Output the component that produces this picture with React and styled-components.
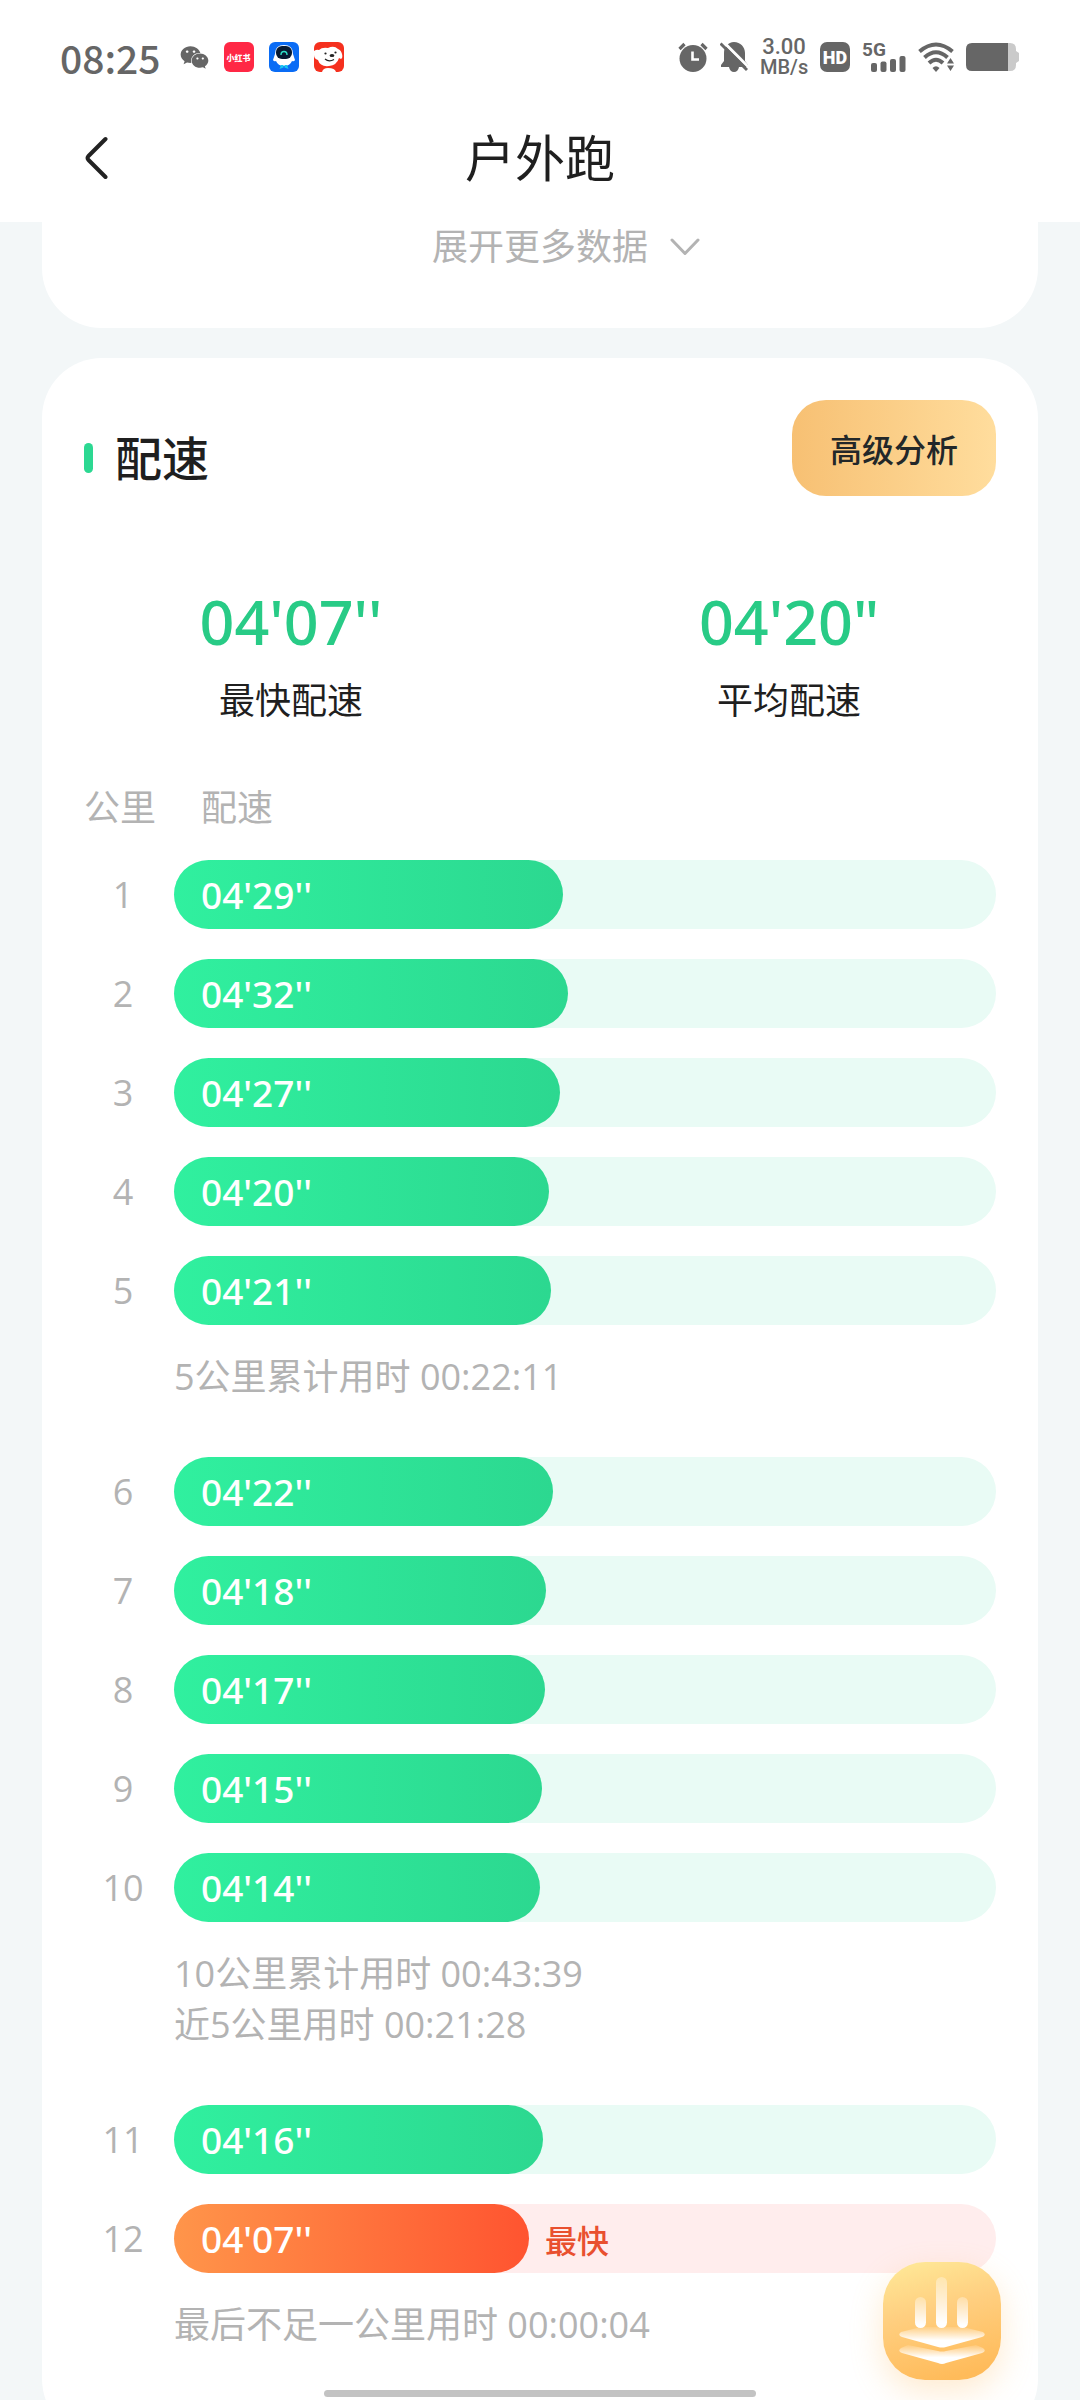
import styled, { createGlobalStyle } from "styled-components";
import { FaWeixin } from "react-icons/fa";

const GlobalStyle = createGlobalStyle`
  * {
    box-sizing: border-box;
  }

  body {
    margin: 0;
    background: #f3f7f8;
    color: #1f1f1f;
    font-family: "Open Sans", "Noto Sans CJK SC", sans-serif;
  }

  button {
    border: none;
    padding: 0;
    background: none;
    color: inherit;
    font-family: inherit;
    cursor: pointer;
  }
`;

const Screen = styled.div`
  height: 100vh;
  display: flex;
  flex-direction: column;
  overflow: hidden;
`;

// status bar

const StatusBar = styled.div`
  flex: none;
  display: flex;
  align-items: center;
  justify-content: space-between;
  height: 94px;
  padding: 20px 61px 0 60px;
  background: white;
  color: #666;
`;

const StatusGroup = styled.div`
  display: flex;
  align-items: center;
  gap: ${(props) => props.$gap}px;
`;

const Clock = styled.span`
  margin-right: 4px;
  font-family: "Noto Sans CJK SC", sans-serif;
  font-size: 39px;
  font-weight: 500;
  line-height: 36px;
`;

const AppBadge = styled.span`
  display: flex;
  align-items: center;
  justify-content: center;
  width: 30px;
  height: 30px;
  border-radius: 6px;
  background: #ff2845;
  color: white;
  font-size: 8px;
  font-weight: 900;
  white-space: nowrap;
`;

const NetSpeed = styled.div`
  width: 48px;
  font-family: Roboto, sans-serif;
  font-size: 20px;
  font-weight: 500;
  line-height: 20px;
  text-align: center;
`;

const SpeedValue = styled.div`
  font-size: 22px;
`;

const HdBadge = styled.span`
  display: flex;
  align-items: center;
  justify-content: center;
  width: 30px;
  height: 30px;
  border-radius: 7px;
  background: #666;
  color: white;
  font-family: Roboto, sans-serif;
  font-size: 18px;
  font-weight: 900;
`;

// title bar

const TitleBar = styled.header`
  flex: none;
  display: grid;
  grid-template-columns: 1fr auto 1fr;
  align-items: center;
  height: 128px;
  padding: 0 84px;
  background: white;
`;

const BackButton = styled.button`
  display: flex;
  justify-self: start;
`;

const PageTitle = styled.h1`
  margin: 0;
  font-size: 50px;
  font-weight: 400;
  line-height: 64px;
`;

const Content = styled.main`
  flex: 1;
  min-height: 0;
  overflow: hidden;
  padding: 0 42px;
  display: flex;
  flex-direction: column;
  gap: 30px;
`;

const MoreCard = styled.section`
  flex: none;
  padding-bottom: 56px;
  background: white;
  border-radius: 0 0 60px 60px;
`;

const MoreButton = styled.button`
  display: grid;
  grid-template-columns: 1fr auto 1fr;
  align-items: center;
  column-gap: 22px;
  width: 100%;
  color: #b3b3b3;
  font-size: 36px;
  line-height: 50px;
`;

const MoreLabel = styled.span`
  grid-column: 2;
`;

const PaceCard = styled.section`
  flex: none;
  padding: 42px 42px 64px;
  background: white;
  border-radius: 60px;
`;

const CardHead = styled.div`
  display: flex;
  align-items: flex-end;
  justify-content: space-between;
`;

const CardTitle = styled.h2`
  display: flex;
  align-items: center;
  gap: 22px;
  margin: 0;
  font-size: 47px;
  font-weight: 500;
  line-height: 76px;

  &::before {
    content: "";
    width: 9px;
    height: 30px;
    border-radius: 5px;
    background: #2cd892;
  }
`;

const AnalysisButton = styled.button`
  height: 96px;
  padding: 0 38px;
  border-radius: 34px;
  background: linear-gradient(90deg, #f7c073, #ffdd9d);
  color: #222729;
  font-size: 32px;
  font-weight: 500;
`;

const Stats = styled.div`
  display: grid;
  grid-template-columns: 1fr 1fr;
  margin: 86px -42px 60px;
  text-align: center;
`;

const StatValue = styled.div`
  margin-bottom: 14px;
  color: #28cb86;
  font-family: "Noto Sans", sans-serif;
  font-size: 61px;
  font-weight: 500;
  line-height: 80px;
`;

const StatLabel = styled.div`
  font-size: 36px;
  line-height: 50px;
`;

// pace table

const PaceTable = styled.table`
  width: 100%;
  border-collapse: collapse;
  color: #b3b3b3;
`;

const HeadCell = styled.th`
  width: ${(props) => props.$width || "auto"};
  padding: 0 0 0 ${(props) => props.$indent || 0}px;
  font-size: 36px;
  font-weight: 400;
  line-height: 44px;
  text-align: left;
`;

const KmCell = styled.td`
  padding: 30px 12px 0 0;
  font-size: 36px;
  line-height: 69px;
  text-align: center;
`;

const BarCell = styled.td`
  padding: 30px 0 0;
`;

const NoteCell = styled.td`
  padding: 26px 0 25px;
  font-size: 36px;
  line-height: 51px;
`;

const Track = styled.div`
  display: flex;
  align-items: center;
  gap: 16px;
  height: 69px;
  border-radius: 35px;
  background: ${(props) => (props.$fastest ? "#ffeded" : "#e9fbf5")};
`;

const Fill = styled.div`
  height: 69px;
  padding-left: 27px;
  border-radius: 35px;
  background: ${(props) =>
    props.$fastest
      ? "linear-gradient(90deg, #ff954a, #ff5430)"
      : "linear-gradient(90deg, #30f09f, #2cd890)"};
  color: white;
  font-family: "Noto Sans", sans-serif;
  font-size: 37px;
  font-weight: 500;
  line-height: 69px;
`;

const FastestTag = styled.span`
  color: #e9502f;
  font-size: 32px;
  font-weight: 500;
`;

const FloatingButton = styled.button`
  position: fixed;
  right: 79px;
  bottom: 20px;
  width: 118px;
  height: 118px;
  border-radius: 42px;
  background: linear-gradient(165deg, #ffe998 2%, #ffcf80 40%, #ffbb5a 90%);
  box-shadow: 0 12px 32px rgba(255, 190, 100, 0.3);
`;

const HomeIndicator = styled.div`
  position: fixed;
  bottom: 3px;
  left: 30%;
  right: 30%;
  height: 7px;
  border-radius: 4px;
  background: #c3c3c3;
`;

const AssistantIcon = () => (
  <svg width="30" height="30" viewBox="0 0 30 30">
    <rect width="30" height="30" rx="6" fill="#0a6cf5" />
    <path d="M6 12 Q6 3 15 3 Q24 3 24 12 L26 18 Q25 20 23 19 Q21 24 15 24 Q9 24 7 19 Q5 20 4 18Z" fill="#fff" />
    <rect x="7" y="4" width="16" height="13" rx="6" fill="#071a33" />
    <path d="M12 13 Q12 9.5 15 9.5 Q18 9.5 18 13" fill="none" stroke="#2fe0c8" strokeWidth="1.4" />
    <path d="M12 23h2.500v2.500l-4 1.500zM18 23h-2.500v2.500l4 1.500z" fill="#19c8f0" />
  </svg>
);

const DogIcon = () => (
  <svg width="30" height="30" viewBox="0 0 30 30">
    <rect width="30" height="30" rx="6" fill="#f5301e" />
    <path d="M0 9 Q3 7 5 8 Q8 5 14 6 Q20 3 24 7 Q27 8 28 12 Q29 16 27 17 L25 16 Q23 23 15 24 Q6 25 4 18 Q0 17 0 13Z" fill="#fff" />
    <path d="M8 30 Q9 26 14 26 Q21 26 22 30Z" fill="#fff" />
    <ellipse cx="18" cy="13.500" rx="2.400" ry="1.600" fill="#222" />
    <circle cx="11.500" cy="11.500" r="1.100" fill="#222" />
    <circle cx="21.500" cy="10.500" r="1.100" fill="#222" />
    <path d="M11 17 Q15 20.500 20 17.500" fill="none" stroke="#222" strokeWidth="1.200" />
  </svg>
);

const AlarmIcon = () => (
  <svg width="30" height="30" viewBox="0 0 30 30" fill="none">
    <circle cx="15" cy="16.500" r="13.500" fill="#666" />
    <path d="M1.500 7 L6.500 2 M28.500 7 L23.500 2" stroke="#666" strokeWidth="3.200" />
    <path d="M14.500 9.500 V17.500 H21" stroke="#fff" strokeWidth="2.600" />
  </svg>
);

const MutedBellIcon = () => (
  <svg width="28" height="30" viewBox="0 0 28 30">
    <path d="M14 0 C20.500 0 25 5 25 11 V19 L28 23 V25 H1 V23 L4 19 V11 C4 5 8 0 14 0Z" fill="#666" />
    <path d="M9 25 H19 Q18 30 14 30 Q10 30 9 25Z" fill="#666" />
    <path d="M3 -0.500 L30 26.500" stroke="#fff" strokeWidth="3" />
    <path d="M0.500 1.500 L27 28" stroke="#666" strokeWidth="3" />
  </svg>
);

const SignalIcon = () => (
  <svg width="44" height="46" viewBox="0 -8 44 46" fill="#666">
    <text x="0" y="14" fontFamily="Roboto, sans-serif" fontSize="19" fontWeight="700">
      5G
    </text>
    <rect x="9" y="21" width="6" height="9" rx="2" />
    <rect x="18.500" y="19.500" width="6" height="10.500" rx="2" />
    <rect x="28" y="17" width="6" height="13" rx="2" />
    <rect x="37.500" y="14" width="6" height="16" rx="2" />
  </svg>
);

const WifiIcon = () => (
  <svg width="36" height="30" viewBox="0 0 36 30" fill="none" stroke="#666" strokeWidth="4">
    <path d="M1.500 9.500 Q18 -4.500 34.500 9.500" />
    <path d="M6.500 15.500 Q18 5 29.500 15.500" />
    <path d="M11 21 Q18 14.500 25 21" />
    <path d="M14.500 26 Q18 22.500 21.500 26 L18 30Z" fill="#666" stroke="none" />
    <path d="M29 21.500 L32.500 16 L36 21.500Z M29 23.500 L32.500 29 L36 23.500Z" fill="#666" stroke="none" />
  </svg>
);

const BatteryIcon = () => (
  <svg width="53" height="28" viewBox="0 0 53 28">
    <path d="M42 0 H44 Q50 0 50 6 V8 L53 10 V18 L50 20 V22 Q50 28 44 28 H42Z" fill="#cacaca" />
    <path d="M6 0 H42 V28 H6 Q0 28 0 22 V6 Q0 0 6 0Z" fill="#666" />
  </svg>
);

const BackIcon = () => (
  <svg width="24" height="44" viewBox="0 0 24 44" fill="none">
    <path d="M21.500 3 L4.500 20 Q2.500 22 4.500 24 L21.500 41" stroke="#222" strokeWidth="4" strokeLinecap="round" />
  </svg>
);

const DownIcon = () => (
  <svg width="30" height="18" viewBox="0 0 30 18" fill="none">
    <path d="M2 2 L15 15.500 L28 2" stroke="#b3b3b3" strokeWidth="3" strokeLinecap="round" strokeLinejoin="round" />
  </svg>
);

const LayersIcon = () => (
  <svg width="118" height="118" viewBox="0 0 118 118">
    <defs>
      <linearGradient id="bar" x1="0" y1="0" x2="0" y2="1">
        <stop offset="0" stopColor="#fff" stopOpacity="0.3" />
        <stop offset="0.900" stopColor="#fff" />
      </linearGradient>
      <linearGradient id="layer" x1="0" y1="0" x2="0" y2="1">
        <stop offset="0" stopColor="#fff" stopOpacity="0.1" />
        <stop offset="0.650" stopColor="#fff" />
      </linearGradient>
    </defs>
    <path d="M18 70 Q14 73 19 75 L55 85 Q59 86 63 85 L99 75 Q104 73 100 70 L80 65 H38Z" fill="url(#layer)" />
    <path d="M25 83 L18 86 Q14 89 19 91 L55 101 Q59 103 63 101 L99 91 Q104 89 100 86 L93 83 L63 89 Q59 90 55 89Z" fill="url(#layer)" />
    <rect x="32" y="35" width="11" height="31" rx="5.500" fill="url(#bar)" />
    <rect x="53" y="15" width="11" height="51" rx="5.500" fill="url(#bar)" />
    <rect x="74" y="35" width="11" height="31" rx="5.500" fill="url(#bar)" />
  </svg>
);

const splits = [
  { km: 1, pace: "04'29''", seconds: 269 },
  { km: 2, pace: "04'32''", seconds: 272 },
  { km: 3, pace: "04'27''", seconds: 267 },
  { km: 4, pace: "04'20''", seconds: 260 },
  { km: 5, pace: "04'21''", seconds: 261 },
  { notes: ["5公里累计用时 00:22:11"] },
  { km: 6, pace: "04'22''", seconds: 262 },
  { km: 7, pace: "04'18''", seconds: 258 },
  { km: 8, pace: "04'17''", seconds: 257 },
  { km: 9, pace: "04'15''", seconds: 255 },
  { km: 10, pace: "04'14''", seconds: 254 },
  { notes: ["10公里累计用时 00:43:39", "近5公里用时 00:21:28"] },
  { km: 11, pace: "04'16''", seconds: 256 },
  { km: 12, pace: "04'07''", seconds: 247, fastest: true },
  { notes: ["最后不足一公里用时 00:00:04"] },
];

const FASTEST = 247;

// slower kilometres get a longer bar
const barWidth = (seconds) => `${43.2 + (seconds - FASTEST) * 0.19}%`;

function SplitRow({ split }) {
  if (split.notes) {
    return (
      <tr>
        <td />
        <NoteCell>
          {split.notes.map((note) => (
            <div key={note}>{note}</div>
          ))}
        </NoteCell>
      </tr>
    );
  }

  return (
    <tr>
      <KmCell>{split.km}</KmCell>
      <BarCell>
        <Track $fastest={split.fastest}>
          <Fill $fastest={split.fastest} style={{ width: barWidth(split.seconds) }}>
            {split.pace}
          </Fill>
          {split.fastest && <FastestTag>最快</FastestTag>}
        </Track>
      </BarCell>
    </tr>
  );
}

function App() {
  return (
    <>
      <GlobalStyle />
      <Screen>
        <StatusBar>
          <StatusGroup $gap={15}>
            <Clock>08:25</Clock>
            <FaWeixin size={29} />
            <AppBadge>小红书</AppBadge>
            <AssistantIcon />
            <DogIcon />
          </StatusGroup>
          <StatusGroup $gap={12}>
            <AlarmIcon />
            <MutedBellIcon />
            <NetSpeed>
              <SpeedValue>3.00</SpeedValue>
              MB/s
            </NetSpeed>
            <HdBadge>HD</HdBadge>
            <SignalIcon />
            <WifiIcon />
            <BatteryIcon />
          </StatusGroup>
        </StatusBar>

        <TitleBar>
          <BackButton aria-label="返回">
            <BackIcon />
          </BackButton>
          <PageTitle>户外跑</PageTitle>
        </TitleBar>

        <Content>
          <MoreCard>
            <MoreButton>
              <MoreLabel>展开更多数据</MoreLabel>
              <DownIcon />
            </MoreButton>
          </MoreCard>

          <PaceCard>
            <CardHead>
              <CardTitle>配速</CardTitle>
              <AnalysisButton>高级分析</AnalysisButton>
            </CardHead>

            <Stats>
              <div>
                <StatValue>04'07''</StatValue>
                <StatLabel>最快配速</StatLabel>
              </div>
              <div>
                <StatValue>04'20"</StatValue>
                <StatLabel>平均配速</StatLabel>
              </div>
            </Stats>

            <PaceTable>
              <thead>
                <tr>
                  <HeadCell $width="90px">公里</HeadCell>
                  <HeadCell $indent={27}>配速</HeadCell>
                </tr>
              </thead>
              <tbody>
                {splits.map((split, index) => (
                  <SplitRow key={index} split={split} />
                ))}
              </tbody>
            </PaceTable>
          </PaceCard>
        </Content>
      </Screen>

      <FloatingButton aria-label="数据分析">
        <LayersIcon />
      </FloatingButton>
      <HomeIndicator />
    </>
  );
}

export default App;
